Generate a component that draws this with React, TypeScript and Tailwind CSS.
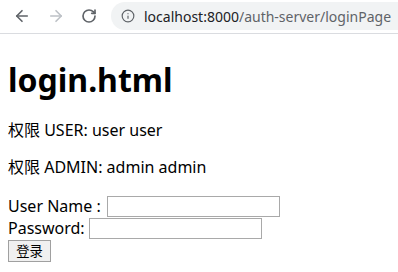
import { ArrowLeft, ArrowRight, RotateCw, Info } from "lucide-react";

const FONT = "font-['Noto_Sans','Noto_Sans_CJK_SC',sans-serif]";

function BrowserBar() {
  return (
    <div className="flex h-[34px] items-start border-b border-[#dadce0] bg-white pt-[2px]">
      <div className="flex h-[28px] items-center gap-[16px] pl-[13px] pr-[14px]">
        <ArrowLeft className="h-[18px] w-[18px] text-[#5f6368]" strokeWidth={2.2} />
        <ArrowRight className="h-[18px] w-[18px] text-[#bdc1c6]" strokeWidth={2.2} />
        <RotateCw className="h-[16px] w-[16px] text-[#5f6368]" strokeWidth={2.5} />
      </div>
      <div className="flex h-[28px] flex-1 items-center gap-[9px] rounded-l-full bg-[#f1f3f4] pl-[10px]">
        <Info className="h-[14px] w-[14px] text-[#5f6368]" strokeWidth={2} />
        <span className="whitespace-nowrap text-[14px] text-[#202124]">
          localhost:8000<span className="text-[#5f6368]">/auth-server/loginPage</span>
        </span>
      </div>
    </div>
  );
}

export default function App() {
  return (
    <div className={`h-[272px] w-[398px] overflow-hidden bg-white text-black ${FONT}`}>
      <BrowserBar />
      <div className="px-[8px] pt-[25px]">
        <h1 className="text-[32px] font-bold leading-[42px]">login.html</h1>
        <p className="mt-[19px] text-[16px] leading-[21px]">权限 USER: user user</p>
        <p className="mt-[16px] text-[16px] leading-[21px]">权限 ADMIN: admin admin</p>
        <form className="mt-[17px] text-[16px] leading-[21px]" onSubmit={(e) => e.preventDefault()}>
          <div className="flex h-[22px] items-center gap-[6px]">
            <span>User Name :</span>
            <input className="h-[21px] w-[173px] border border-[#a9a9a9] px-[2px]" />
          </div>
          <div className="flex h-[23px] items-center gap-[4px]">
            <span>Password:</span>
            <input type="password" className="h-[21px] w-[173px] border border-[#a9a9a9] px-[2px]" />
          </div>
          <button
            type="submit"
            className="h-[22px] w-[43px] border border-[#a0a0a0] bg-[#f0f0f0] text-[13.33px] leading-[18px]"
          >
            登录
          </button>
        </form>
      </div>
    </div>
  );
}
